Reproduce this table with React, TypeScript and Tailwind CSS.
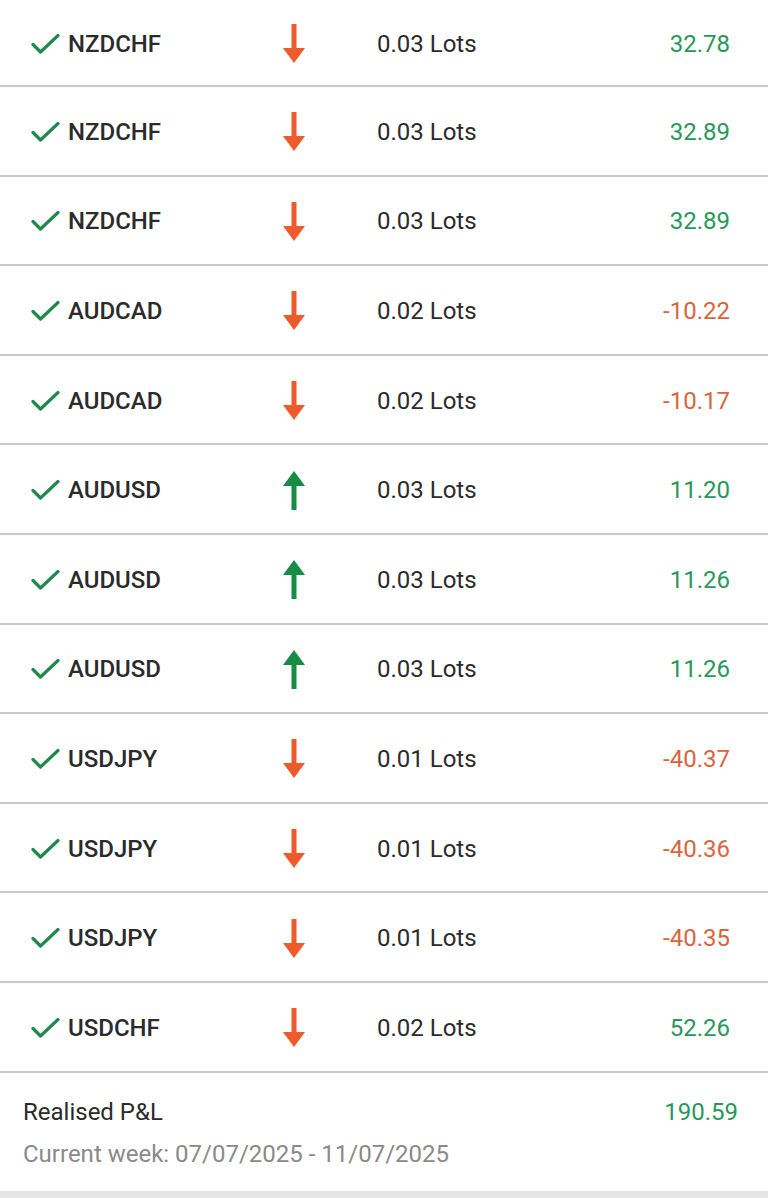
import { Fragment } from 'react';

type Trade = {
	symbol: string;
	dir: 'up' | 'down';
	lots: string;
	pnl: string;
};

const trades: Trade[] = [
	{ symbol: 'NZDCHF', dir: 'down', lots: '0.03 Lots', pnl: '32.78' },
	{ symbol: 'NZDCHF', dir: 'down', lots: '0.03 Lots', pnl: '32.89' },
	{ symbol: 'NZDCHF', dir: 'down', lots: '0.03 Lots', pnl: '32.89' },
	{ symbol: 'AUDCAD', dir: 'down', lots: '0.02 Lots', pnl: '-10.22' },
	{ symbol: 'AUDCAD', dir: 'down', lots: '0.02 Lots', pnl: '-10.17' },
	{ symbol: 'AUDUSD', dir: 'up', lots: '0.03 Lots', pnl: '11.20' },
	{ symbol: 'AUDUSD', dir: 'up', lots: '0.03 Lots', pnl: '11.26' },
	{ symbol: 'AUDUSD', dir: 'up', lots: '0.03 Lots', pnl: '11.26' },
	{ symbol: 'USDJPY', dir: 'down', lots: '0.01 Lots', pnl: '-40.37' },
	{ symbol: 'USDJPY', dir: 'down', lots: '0.01 Lots', pnl: '-40.36' },
	{ symbol: 'USDJPY', dir: 'down', lots: '0.01 Lots', pnl: '-40.35' },
	{ symbol: 'USDCHF', dir: 'down', lots: '0.02 Lots', pnl: '52.26' },
];

function Check() {
	return (
		<svg width="29" height="20" viewBox="0 0 29 20" fill="none">
			<path d="M2 10.5 L9.5 18 L27 1.5" stroke="#1f8a4c" strokeWidth="3.2" strokeLinecap="round" strokeLinejoin="round" />
		</svg>
	);
}

function Arrow({ dir }: { dir: 'up' | 'down' }) {
	const color = dir === 'up' ? '#168c45' : '#ee5a2a';
	return (
		<svg width="22" height="39" viewBox="0 0 22 39" className={dir === 'up' ? 'rotate-180' : ''}>
			<rect x="8.5" y="0" width="5" height="25" fill={color} />
			<path d="M0 24 L22 24 L11 39 Z" fill={color} />
		</svg>
	);
}

export default function App() {
	return (
		<div className="w-[768px] h-[1198px] overflow-hidden bg-white font-['Roboto',sans-serif] text-[#2b2b2b]">
			{trades.map((t, i) => (
				<Fragment key={i}>
					<div
						className={`flex items-center pl-[31px] pr-[38px] border-b-2 border-[#c9c9c9] ${
							i === 0 ? 'h-[87px] pt-[2px]' : 'h-[89.6px] pt-[2px]'
						}`}
					>
						<div className="flex w-[252px] items-center gap-[8px]">
							<Check />
							<span className="text-[24px] font-medium">{t.symbol}</span>
						</div>
						<Arrow dir={t.dir} />
						<span className="ml-[72px] text-[24px]">{t.lots}</span>
						<span
							className={`flex-1 text-right text-[24px] ${
								t.pnl.startsWith('-') ? 'text-[#d9653e]' : 'text-[#27985a]'
							}`}
						>
							{t.pnl}
						</span>
					</div>
				</Fragment>
			))}
			<div className="h-[118px] px-[23px] pr-[30px] pt-[24px]">
				<div className="flex items-center justify-between text-[24px] leading-[30px]">
					<span>Realised P&amp;L</span>
					<span className="text-[#27985a]">190.59</span>
				</div>
				<div className="mt-[12px] text-[24px] leading-[30px] text-[#8a8a8a]">
					Current week: 07/07/2025 - 11/07/2025
				</div>
			</div>
			<div className="h-[20px] bg-gradient-to-b from-[#e4e4e4] to-[#f0f0f0]" />
		</div>
	);
}
